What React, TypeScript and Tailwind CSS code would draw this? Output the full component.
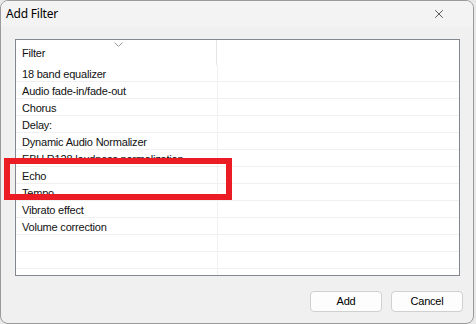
import { X } from "lucide-react";

const filters = [
  "18 band equalizer",
  "Audio fade-in/fade-out",
  "Chorus",
  "Delay:",
  "Dynamic Audio Normalizer",
  "EBU R128 loudness normalization",
  "Echo",
  "Tempo",
  "Vibrato effect",
  "Volume correction",
  "",
  "",
  "",
];

// list + buttons use the narrow dialog font, title uses the wider one
const dlgFont = { fontFamily: '"Liberation Sans", Arial, sans-serif' };

export default function App() {
  return (
    <div
      className="h-[324px] w-[476px] overflow-hidden bg-[#e9e9e9] text-[12px] text-black"
      style={{ fontFamily: '"Noto Sans", "Open Sans", sans-serif' }}
    >
      <div className="relative flex h-[324px] w-[474px] flex-col overflow-hidden rounded-[8px] border border-[#9a9a9a] bg-[#f0f0f0]">
        {/* Title bar */}
        <div className="flex h-[26px] items-center justify-between bg-[#f3f3f3] pl-[5px] pr-[27px]">
          <span className="text-[12px] leading-none tracking-[-0.2px]">Add Filter</span>
          <X size={14} strokeWidth={1.2} className="text-[#1a1a1a]" />
        </div>

        {/* List */}
        <div
          className="ml-[14px] mt-[12px] h-[237px] w-[445px] overflow-hidden border border-[#828790] bg-white text-[11px] tracking-[-0.2px] text-[#111]"
          style={dlgFont}
        >
          <div className="relative flex h-[25px] items-center">
            <div className="flex h-full w-[201px] items-center border-r border-[#e5e5e5] pl-[6px] pt-[2px]">
              Filter
            </div>
            <svg
              className="absolute left-[98px] top-[2px]"
              width="9"
              height="5"
              viewBox="0 0 9 5"
            >
              <path d="M0.5 0.5 L4.5 4.5 L8.5 0.5" fill="none" stroke="#9a9a9a" strokeWidth="1" />
            </svg>
          </div>
          {filters.map((name, i) => (
            <div key={i} className="flex h-[17px] border-b border-[#f0f0f0]">
              <div className="w-[202px] truncate border-r border-[#f0f0f0] pl-[6px] pt-[1px] leading-[16px]">
                {name}
              </div>
              <div className="flex-1" />
            </div>
          ))}
        </div>

        {/* Buttons */}
        <div className="mr-[10px] mt-[15px] flex justify-end gap-[9px]" style={dlgFont}>
          <button className="h-[21px] w-[72px] rounded-[4px] border border-[#d0d0d0] bg-[#fdfdfd] text-[11px] leading-none tracking-[-0.2px]">
            Add
          </button>
          <button className="h-[21px] w-[72px] rounded-[4px] border border-[#d0d0d0] bg-[#fdfdfd] text-[11px] leading-none tracking-[-0.2px]">
            Cancel
          </button>
        </div>

        {/* red highlight annotation */}
        <div className="pointer-events-none absolute left-[3px] top-[157px] h-[42px] w-[228px] border-[6px] border-[#ec1c24]" />
      </div>
    </div>
  );
}
